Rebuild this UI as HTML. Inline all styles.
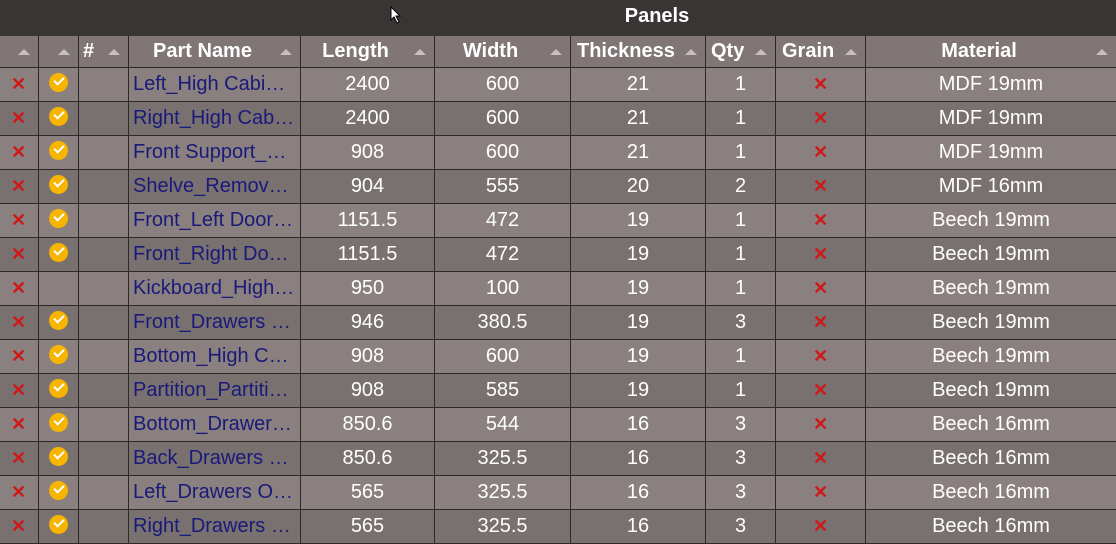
<!DOCTYPE html>
<html><head><meta charset="utf-8"><style>
body{margin:0;width:1116px;height:543px;overflow:hidden;background:#7a7070;font-family:"Liberation Sans",sans-serif}
.title{height:36px;background:#393534;color:#fff;font-weight:bold;font-size:20px;line-height:33px;text-align:center;padding-left:198px;box-sizing:border-box}
table{border-collapse:collapse;table-layout:fixed;width:1118px;position:absolute;top:35px;left:-2px}
td,th{border:1px solid #2b2928;height:33px;padding:0;font-size:20px;color:#fff;text-align:center;white-space:nowrap;overflow:hidden}
th{background:#807675;height:31px;position:relative;font-weight:bold;border-top:1px solid #393534;padding-right:24px}
th .a{position:absolute;right:8px;top:13px;width:0;height:0;border-left:6px solid transparent;border-right:6px solid transparent;border-bottom:6px solid #c8c0be}
tr.l td{background:#8a807f}
tr.d td{background:#797070}
td.n{text-align:left;color:#1a1a7a;padding-left:4px;text-overflow:ellipsis}
.x{color:#d01818;font-weight:bold;font-size:18px}
.c{display:inline-block;width:19px;height:19px;border-radius:50%;background:#f7b500;vertical-align:middle;position:relative;top:-2px}
.c:after{content:"";position:absolute;left:5px;top:4px;width:8px;height:4px;border-left:2.5px solid #fff;border-bottom:2.5px solid #fff;transform:rotate(-45deg)}
</style></head><body>
<div class="title">Panels</div>
<svg style="position:absolute;left:390px;top:6px" width="12" height="18"><path d="M1 1 L1 14 L4 11 L7 17 L9 16 L6 10 L10 10 Z" fill="#fff" stroke="#000" stroke-width="1"/></svg>
<table>
<colgroup><col style="width:40px"><col style="width:40px"><col style="width:50px"><col style="width:172px"><col style="width:134px"><col style="width:136px"><col style="width:135px"><col style="width:70px"><col style="width:90px"><col style="width:251px"></colgroup>
<tr><th><span class="a"></span></th><th><span class="a"></span></th><th style="text-align:left;padding-left:4px">#<span class="a"></span></th><th>Part Name<span class="a"></span></th><th>Length<span class="a"></span></th><th>Width<span class="a"></span></th><th style="text-align:left;padding-left:6px">Thickness<span class="a"></span></th><th style="text-align:left;padding-left:5px">Qty<span class="a"></span></th><th style="text-align:left;padding-left:6px">Grain<span class="a"></span></th><th>Material<span class="a"></span></th></tr>
<tr class="l"><td class="x">✕</td><td><span class="c"></span></td><td></td><td class="n">Left_High Cabi…</td><td>2400</td><td>600</td><td>21</td><td>1</td><td class="x">✕</td><td>MDF 19mm</td></tr>
<tr class="d"><td class="x">✕</td><td><span class="c"></span></td><td></td><td class="n">Right_High Cab…</td><td>2400</td><td>600</td><td>21</td><td>1</td><td class="x">✕</td><td>MDF 19mm</td></tr>
<tr class="l"><td class="x">✕</td><td><span class="c"></span></td><td></td><td class="n">Front Support_…</td><td>908</td><td>600</td><td>21</td><td>1</td><td class="x">✕</td><td>MDF 19mm</td></tr>
<tr class="d"><td class="x">✕</td><td><span class="c"></span></td><td></td><td class="n">Shelve_Remov…</td><td>904</td><td>555</td><td>20</td><td>2</td><td class="x">✕</td><td>MDF 16mm</td></tr>
<tr class="l"><td class="x">✕</td><td><span class="c"></span></td><td></td><td class="n">Front_Left Door…</td><td>1151.5</td><td>472</td><td>19</td><td>1</td><td class="x">✕</td><td>Beech 19mm</td></tr>
<tr class="d"><td class="x">✕</td><td><span class="c"></span></td><td></td><td class="n">Front_Right Do…</td><td>1151.5</td><td>472</td><td>19</td><td>1</td><td class="x">✕</td><td>Beech 19mm</td></tr>
<tr class="l"><td class="x">✕</td><td></td><td></td><td class="n">Kickboard_High…</td><td>950</td><td>100</td><td>19</td><td>1</td><td class="x">✕</td><td>Beech 19mm</td></tr>
<tr class="d"><td class="x">✕</td><td><span class="c"></span></td><td></td><td class="n">Front_Drawers …</td><td>946</td><td>380.5</td><td>19</td><td>3</td><td class="x">✕</td><td>Beech 19mm</td></tr>
<tr class="l"><td class="x">✕</td><td><span class="c"></span></td><td></td><td class="n">Bottom_High C…</td><td>908</td><td>600</td><td>19</td><td>1</td><td class="x">✕</td><td>Beech 19mm</td></tr>
<tr class="d"><td class="x">✕</td><td><span class="c"></span></td><td></td><td class="n">Partition_Partiti…</td><td>908</td><td>585</td><td>19</td><td>1</td><td class="x">✕</td><td>Beech 19mm</td></tr>
<tr class="l"><td class="x">✕</td><td><span class="c"></span></td><td></td><td class="n">Bottom_Drawer…</td><td>850.6</td><td>544</td><td>16</td><td>3</td><td class="x">✕</td><td>Beech 16mm</td></tr>
<tr class="d"><td class="x">✕</td><td><span class="c"></span></td><td></td><td class="n">Back_Drawers …</td><td>850.6</td><td>325.5</td><td>16</td><td>3</td><td class="x">✕</td><td>Beech 16mm</td></tr>
<tr class="l"><td class="x">✕</td><td><span class="c"></span></td><td></td><td class="n">Left_Drawers O…</td><td>565</td><td>325.5</td><td>16</td><td>3</td><td class="x">✕</td><td>Beech 16mm</td></tr>
<tr class="d"><td class="x">✕</td><td><span class="c"></span></td><td></td><td class="n">Right_Drawers …</td><td>565</td><td>325.5</td><td>16</td><td>3</td><td class="x">✕</td><td>Beech 16mm</td></tr>
</table>
</body></html>
